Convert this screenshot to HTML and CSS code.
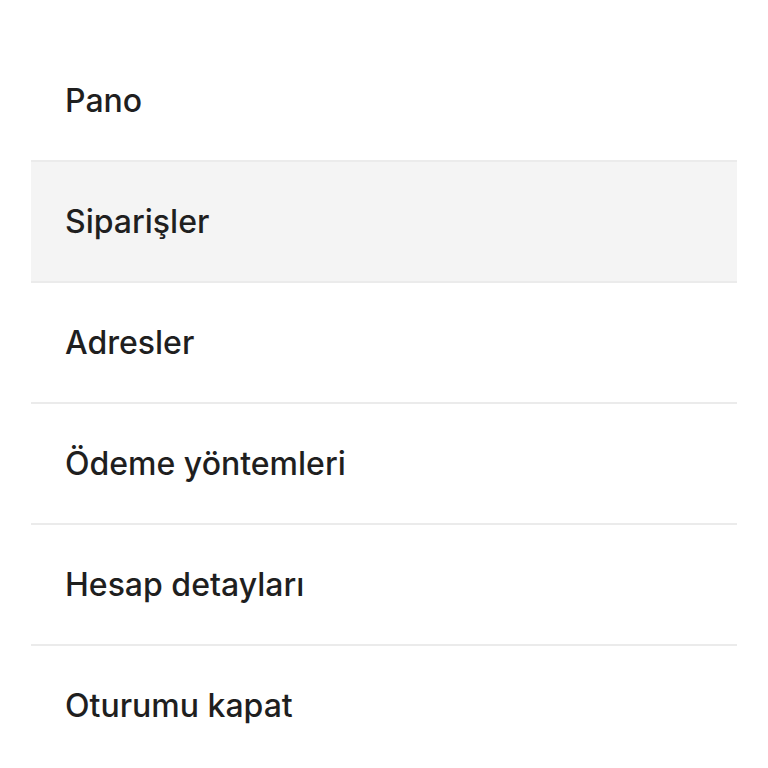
FILE: index.html
```html
<!DOCTYPE html>
<html lang="tr">
<head>
    <meta charset="UTF-8">
    <meta name="viewport" content="width=device-width, initial-scale=1.0">
    <title>Hesabım</title>
    <link rel="stylesheet" href="styles.css">
</head>
<body>
    <nav class="account-nav">
        <ul class="account-menu">
            <li class="menu-item"><a href="#">Pano</a></li>
            <li class="menu-item is-active"><a href="#">Siparişler</a></li>
            <li class="menu-item"><a href="#">Adresler</a></li>
            <li class="menu-item"><a href="#">Ödeme yöntemleri</a></li>
            <li class="menu-item"><a href="#">Hesap detayları</a></li>
            <li class="menu-item"><a href="#">Oturumu kapat</a></li>
        </ul>
    </nav>
</body>
</html>
```

FILE: styles.css
```css
body {
    font-family: 'Inter', 'Liberation Sans', sans-serif;
    background-color: #fff;
    margin: 0;
    padding: 0;
    color: #1f1f1f;
}
.account-nav {
    padding: 41px 31px 0 31px;
}
.account-menu {
    list-style: none;
    margin: 0;
    padding: 0;
}
.menu-item {
    border-bottom: 2px solid #ebebeb;
}
.menu-item:last-child {
    border-bottom: none;
}
.menu-item a {
    display: flex;
    align-items: center;
    height: 119px;
    padding-left: 34px;
    color: #1f1f1f;
    text-decoration: none;
    font-size: 32px;
    font-weight: 550;
}
.menu-item.is-active {
    background-color: #f4f4f4;
}
```
